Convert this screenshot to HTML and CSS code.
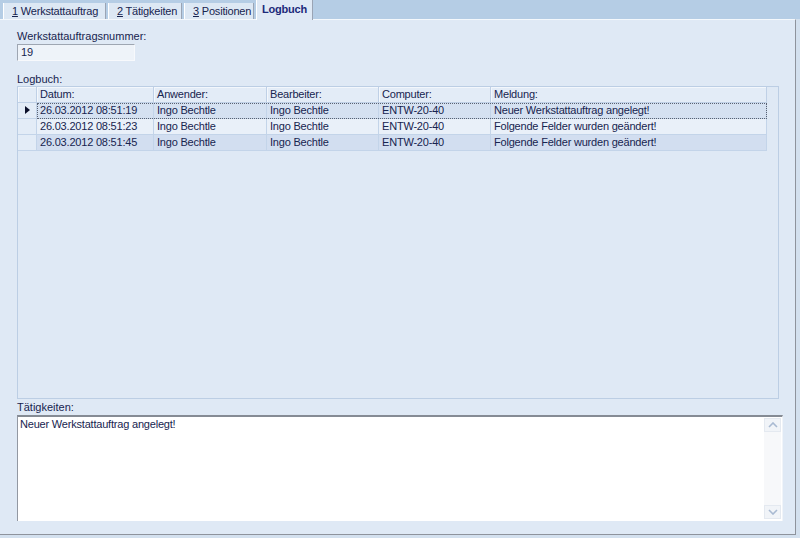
FILE: index.html
```html
<!DOCTYPE html>
<html>
<head>
<meta charset="utf-8">
<link rel="stylesheet" href="styles.css">
</head>
<body>
<div class="tabs">
  <div class="tab t1"><u>1</u> Werkstattauftrag</div>
  <div class="tab t2"><u>2</u> Tätigkeiten</div>
  <div class="tab t3"><u>3</u> Positionen</div>
  <div class="tab active">Logbuch</div>
</div>
<div class="panel">
  <div class="label first">Werkstattauftragsnummer:</div>
  <div class="input">19</div>
  <div class="label">Logbuch:</div>
  <div class="grid">
    <div class="row head">
      <div class="cell ind"></div>
      <div class="cell">Datum:</div>
      <div class="cell">Anwender:</div>
      <div class="cell">Bearbeiter:</div>
      <div class="cell">Computer:</div>
      <div class="cell">Meldung:</div>
    </div>
    <div class="row r1">
      <div class="cell ind"><span class="arrow"></span></div>
      <div class="sel">
        <div class="cell">26.03.2012 08:51:19</div>
        <div class="cell">Ingo Bechtle</div>
        <div class="cell">Ingo Bechtle</div>
        <div class="cell">ENTW-20-40</div>
        <div class="cell">Neuer Werkstattauftrag angelegt!</div>
      </div>
    </div>
    <div class="row r2">
      <div class="cell ind"></div>
      <div class="cell">26.03.2012 08:51:23</div>
      <div class="cell">Ingo Bechtle</div>
      <div class="cell">Ingo Bechtle</div>
      <div class="cell">ENTW-20-40</div>
      <div class="cell">Folgende Felder wurden geändert!</div>
    </div>
    <div class="row r3">
      <div class="cell ind"></div>
      <div class="cell">26.03.2012 08:51:45</div>
      <div class="cell">Ingo Bechtle</div>
      <div class="cell">Ingo Bechtle</div>
      <div class="cell">ENTW-20-40</div>
      <div class="cell">Folgende Felder wurden geändert!</div>
    </div>
  </div>
  <div class="label">Tätigkeiten:</div>
  <div class="memo">
    <div class="memo-text">Neuer Werkstattauftrag angelegt!</div>
    <div class="scroll">
      <div class="sbtn"><svg width="10" height="6" viewBox="0 0 10 6"><path d="M1 5 L5 1 L9 5" fill="none" stroke="#a9bad2" stroke-width="1.6"/></svg></div>
      <div class="strack"></div>
      <div class="sbtn"><svg width="10" height="6" viewBox="0 0 10 6"><path d="M1 1 L5 5 L9 1" fill="none" stroke="#a9bad2" stroke-width="1.6"/></svg></div>
    </div>
  </div>
</div>
</body>
</html>
```
FILE: styles.css
```css
html, body {
  margin: 0;
  padding: 0;
  background: #d3e0ee;
  width: 800px;
  height: 538px;
  overflow: hidden;
}
body {
  font-family: "Liberation Sans", Arial, sans-serif;
  font-size: 11px;
  color: #17244f;
}
.tabs {
  height: 19px;
  background: #b5cde5;
  display: flex;
  align-items: flex-end;
  padding-left: 3px;
  width: 797px;
}
.tab {
  box-sizing: border-box;
  height: 16px;
  line-height: 16px;
  padding: 0 0 0 8px;
  background: #dde8f4;
  border-left: 1px solid #ffffff;
  border-right: 1px solid #9aa4b4;
  margin-right: 2px;
  white-space: nowrap;
  overflow: hidden;
  letter-spacing: -0.2px;
}
.t1 { width: 103px; }
.t2 { width: 74px; }
.t3 { width: 70px; }
.tab.active {
  width: 57px;
  height: 20px;
  line-height: 18px;
  font-weight: bold;
  color: #1c2a7a;
  background: #dfe9f5;
  margin-bottom: -1px;
  position: relative;
  z-index: 1;
  padding: 0 0 0 5px;
  letter-spacing: -0.2px;
}
.panel {
  width: 762px;
  height: 514px;
  background: #dfe9f5;
  border-top: 1px solid #f4f8fc;
  border-right: 1px solid #8e939c;
  border-bottom: 1px solid #8e939c;
  padding: 0 16px 0 17px;
  display: flex;
  flex-direction: column;
}
.label {
  height: 13px;
  line-height: 13px;
  margin-top: 2px;
}
.label.first { margin-top: 10px; }
.input {
  width: 113px;
  height: 15px;
  line-height: 15px;
  margin-top: 1px;
  padding-left: 3px;
  background: #eef3f9;
  border-top: 1px solid #9ea6b2;
  border-left: 1px solid #9ea6b2;
  border-right: 1px solid #f7f9fc;
  border-bottom: 1px solid #f7f9fc;
  margin-bottom: 10px;
}
.grid {
  height: 311px;
  border: 1px solid #bccee4;
  background: #dfe9f5;
}
.row {
  display: grid;
  grid-template-columns: 19px 117px 113px 112px 112px 276px;
  height: 16px;
}
.sel {
  grid-column: 2 / 7;
  display: grid;
  grid-template-columns: 117px 113px 112px 112px 276px;
  outline: 1px dotted #5a6272;
  outline-offset: -1px;
}
.cell {
  box-sizing: border-box;
  height: 16px;
  line-height: 15px;
  padding-left: 3px;
  border-right: 1px solid #c3d4e9;
  border-bottom: 1px solid #c3d4e9;
  white-space: nowrap;
  overflow: hidden;
  letter-spacing: -0.2px;
}
.head .cell {
  background: #e3ecf7;
  border-right: 1px solid #bfd0e6;
  border-bottom: 1px solid #bfd0e6;
  box-shadow: inset 1px 1px 0 #f3f7fc;
}
.ind {
  background: #e3ecf7;
  position: relative;
  padding: 0;
}
.r1 .cell { background: #d5e1f1; }
.r2 .cell { background: #e9f0f9; }
.r3 .cell { background: #d2def0; }
.r1 .ind, .r2 .ind, .r3 .ind { background: #e3ecf7; }
.arrow {
  position: absolute;
  left: 7px;
  top: 3px;
  width: 0;
  height: 0;
  border-top: 4px solid transparent;
  border-bottom: 4px solid transparent;
  border-left: 5px solid #0a0f2a;
}
.memo {
  height: 104px;
  width: 764px;
  background: #ffffff;
  border-top: 2px solid #858b94;
  border-left: 1px solid #9298a2;
  border-right: 1px solid #f0f4f9;
  display: flex;
  margin-top: 1px;
}
.memo-text {
  flex: 1;
  padding: 1px 0 0 2px;
  line-height: 13px;
  letter-spacing: -0.2px;
}
.scroll {
  width: 17px;
  margin: 1px 1px 2px 0;
  display: flex;
  flex-direction: column;
  background: #f5f7fa;
}
.sbtn {
  height: 14px;
  box-sizing: border-box;
  border: 1px solid #e4e9f0;
  background: #f1f4f8;
  display: flex;
  align-items: center;
  justify-content: center;
}
.strack {
  flex: 1;
  background: #f7f8fa;
}
```
